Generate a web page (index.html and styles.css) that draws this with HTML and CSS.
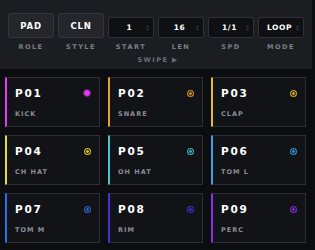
FILE: index.html
```html
<!DOCTYPE html>
<html lang="en">
<head>
  <meta charset="UTF-8" />
  <title>Pads</title>
  <link rel="stylesheet" href="styles.css">
</head>
<body>
  <div class="panel">
    <div class="controls">
      <div class="field">
        <div class="btn">PAD</div>
        <div class="label">ROLE</div>
      </div>
      <div class="field">
        <div class="btn">CLN</div>
        <div class="label">STYLE</div>
      </div>
      <div class="field">
        <div class="select"><span>1</span><svg class="arrows" viewBox="0 0 4 7"><path d="M2 0L4 2.5H0Z M2 7L4 4.5H0Z"/></svg></div>
        <div class="label">START</div>
      </div>
      <div class="field">
        <div class="select"><span>16</span><svg class="arrows" viewBox="0 0 4 7"><path d="M2 0L4 2.5H0Z M2 7L4 4.5H0Z"/></svg></div>
        <div class="label">LEN</div>
      </div>
      <div class="field">
        <div class="select"><span>1/1</span><svg class="arrows" viewBox="0 0 4 7"><path d="M2 0L4 2.5H0Z M2 7L4 4.5H0Z"/></svg></div>
        <div class="label">SPD</div>
      </div>
      <div class="field">
        <div class="select"><span>LOOP</span><svg class="arrows" viewBox="0 0 4 7"><path d="M2 0L4 2.5H0Z M2 7L4 4.5H0Z"/></svg></div>
        <div class="label">MODE</div>
      </div>
    </div>
    <div class="swipe">SWIPE ▶</div>
  </div>

  <div class="grid">
    <div class="pad c1"><div class="pad-head"><span class="pad-id">P01</span><span class="dot active"></span></div><div class="pad-name">KICK</div></div>
    <div class="pad c2"><div class="pad-head"><span class="pad-id">P02</span><span class="dot"></span></div><div class="pad-name">SNARE</div></div>
    <div class="pad c3"><div class="pad-head"><span class="pad-id">P03</span><span class="dot"></span></div><div class="pad-name">CLAP</div></div>
    <div class="pad c4"><div class="pad-head"><span class="pad-id">P04</span><span class="dot"></span></div><div class="pad-name">CH HAT</div></div>
    <div class="pad c5"><div class="pad-head"><span class="pad-id">P05</span><span class="dot"></span></div><div class="pad-name">OH HAT</div></div>
    <div class="pad c6"><div class="pad-head"><span class="pad-id">P06</span><span class="dot"></span></div><div class="pad-name">TOM L</div></div>
    <div class="pad c7"><div class="pad-head"><span class="pad-id">P07</span><span class="dot"></span></div><div class="pad-name">TOM M</div></div>
    <div class="pad c8"><div class="pad-head"><span class="pad-id">P08</span><span class="dot"></span></div><div class="pad-name">RIM</div></div>
    <div class="pad c9"><div class="pad-head"><span class="pad-id">P09</span><span class="dot"></span></div><div class="pad-name">PERC</div></div>
  </div>
</body>
</html>
```

FILE: styles.css
```css
body {
  margin: 0;
  background: #0c0d10;
  font-family: 'DejaVu Sans', sans-serif;
  font-weight: bold;
  color: #fff;
}

.panel {
  width: 312px;
  height: 69px;
  box-sizing: border-box;
  padding: 13px 0 0 8px;
  background: #1c1d21;
}

.controls {
  display: flex;
  align-items: flex-end;
  gap: 4px;
}

.field {
  width: 46px;
  display: flex;
  flex-direction: column;
  align-items: center;
}

.btn {
  width: 100%;
  height: 25px;
  box-sizing: border-box;
  display: flex;
  justify-content: center;
  align-items: center;
  background: #25262b;
  border: 1px solid #35363c;
  border-radius: 2px;
  font-size: 8.5px;
  letter-spacing: 0.8px;
}

.select {
  width: 100%;
  height: 21px;
  box-sizing: border-box;
  display: flex;
  justify-content: center;
  align-items: center;
  position: relative;
  background: #0f1013;
  border: 1px solid #303137;
  border-radius: 2px;
  font-size: 7.5px;
  letter-spacing: 0.6px;
  padding-right: 3px;
}

.arrows {
  position: absolute;
  right: 4px;
  top: 7px;
  width: 3px;
  height: 6px;
  fill: #3c3d43;
}

.label {
  margin-top: 5px;
  font-size: 6.5px;
  letter-spacing: 1.5px;
  color: #7c7f88;
}

.swipe {
  margin-top: 5px;
  padding-right: 4px;
  text-align: center;
  font-size: 6.5px;
  letter-spacing: 1.5px;
  color: #6c6f78;
}

.grid {
  display: grid;
  grid-template-columns: repeat(3, 95px);
  grid-auto-rows: 50px;
  gap: 8px;
  padding: 8px 0 0 5px;
}

.pad {
  box-sizing: border-box;
  background: #121317;
  border: 1px solid #2c2e34;
  border-left: 2px solid var(--c);
  padding: 9px 8px 0 8px;
  display: flex;
  flex-direction: column;
}

.pad-head {
  display: flex;
  justify-content: space-between;
  align-items: center;
  height: 12px;
}

.pad-id {
  font-size: 10.5px;
  letter-spacing: 1.8px;
}

.pad-name {
  margin-top: 11px;
  font-size: 6.5px;
  letter-spacing: 1px;
  color: #8b8d96;
}

.dot {
  width: 3px;
  height: 3px;
  margin-right: 1px;
  border-radius: 50%;
  background: var(--c);
  border: 1px solid #121317;
  box-shadow: 0 0 0 1px var(--c);
  opacity: 0.85;
}

.dot.active {
  width: 6px;
  height: 6px;
  margin-right: 0;
  border: 1px solid #5a1f60;
  box-shadow: none;
  opacity: 1;
}

.c1 { --c: #e23cf0; }
.c2 { --c: #e8a02a; }
.c3 { --c: #e4bd2e; }
.c4 { --c: #e6dc32; }
.c5 { --c: #45c6cf; }
.c6 { --c: #38a4e4; }
.c7 { --c: #2f6de6; }
.c8 { --c: #4a2ed8; }
.c9 { --c: #8d2ee6; }
```
